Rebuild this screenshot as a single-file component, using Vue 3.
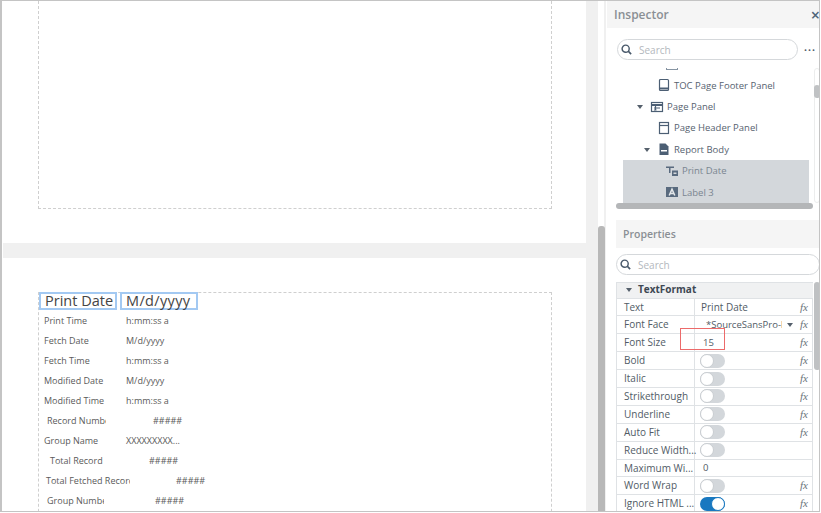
<script setup>
const fields = [
  { label: 'Print Time', value: 'h:mm:ss a', pad: 5, w: 87 },
  { label: 'Fetch Date', value: 'M/d/yyyy', pad: 5, w: 87 },
  { label: 'Fetch Time', value: 'h:mm:ss a', pad: 5, w: 87 },
  { label: 'Modified Date', value: 'M/d/yyyy', pad: 5, w: 87 },
  { label: 'Modified Time', value: 'h:mm:ss a', pad: 5, w: 87 },
  { label: 'Record Number', value: '#####', pad: 8, w: 67, vpad: 47 },
  { label: 'Group Name', value: 'XXXXXXXXX...', pad: 5, w: 87 },
  { label: 'Total Record', value: '#####', pad: 11, w: 64, vpad: 46 },
  { label: 'Total Fetched Record', value: '#####', pad: 7, w: 91, vpad: 46 },
  { label: 'Group Number', value: '#####', pad: 8, w: 65, vpad: 51 }
]
const tree = [
  { name: 'TOC Page Footer Panel', indent: 41, icon: 'footer' },
  { name: 'Page Panel', indent: 34, icon: 'panel', arrow: true, arrowAt: 21 },
  { name: 'Page Header Panel', indent: 41, icon: 'header' },
  { name: 'Report Body', indent: 41, icon: 'doc', arrow: true, arrowAt: 28 },
  { name: 'Print Date', indent: 42, icon: 'date', sel: true },
  { name: 'Label 3', indent: 42, icon: 'label', sel: true }
]
const props = [
  { n: 'Text', v: 'Print Date', fx: true },
  { n: 'Font Face', v: '*SourceSansPro-l', fx: true, select: true },
  { n: 'Font Size', v: '15', fx: true, num: true },
  { n: 'Bold', t: 'off', fx: true },
  { n: 'Italic', t: 'off', fx: true },
  { n: 'Strikethrough', t: 'off', fx: true },
  { n: 'Underline', t: 'off', fx: true },
  { n: 'Auto Fit', t: 'off', fx: true },
  { n: 'Reduce Width...', t: 'off' },
  { n: 'Maximum Wi...', v: '0', num: true },
  { n: 'Word Wrap', t: 'off', fx: true },
  { n: 'Ignore HTML ...', t: 'on', fx: true }
]
</script>

<template>
  <div class="frame">
    <main class="canvas">
      <section class="page first">
        <div class="box box-top"></div>
      </section>
      <section class="page second">
        <div class="box box-bottom">
          <div class="head-row">
            <span class="picked picked-a">Print Date</span>
            <span class="picked picked-b">M/d/yyyy</span>
          </div>
          <div v-for="f in fields" :key="f.label" class="field">
            <span class="f-label" :style="{ paddingLeft: f.pad + 'px', width: f.w + 'px' }">{{ f.label }}</span>
            <span class="f-value" :style="{ paddingLeft: (f.vpad || 0) + 'px' }">{{ f.value }}</span>
          </div>
        </div>
      </section>
    </main>
    <div class="gutter"><div class="gutter-track"></div><div class="gutter-thumb"></div></div>
    <aside class="side">
      <header class="ins-head">
        <span>Inspector</span><span class="close">×</span>
      </header>
      <div class="ins-search">
        <div class="search">
          <svg width="11" height="11" viewBox="0 0 13 13"><circle cx="5.5" cy="5.5" r="4.2" fill="none" stroke="#48586a" stroke-width="1.7"/><path d="M8.5 8.5L12 12" stroke="#48586a" stroke-width="1.9"/></svg>
          <span>Search</span>
        </div>
        <span class="dots">•••</span>
      </div>
      <div class="tree-wrap">
        <div class="tree">
          <div class="cut-icon"></div>
          <div v-for="t in tree" :key="t.name" class="node" :class="{ sel: t.sel }" :style="{ paddingLeft: t.indent + 'px' }">
            <i v-if="t.arrow" class="tri" :style="{ left: t.arrowAt + 'px' }"></i>
            <svg width="14" height="14" viewBox="0 0 14 14" class="ico">
              <g v-if="t.icon === 'footer'" fill="none" stroke="#4c5f74" stroke-width="1.2"><rect x="2.500" y="1.500" width="9" height="11" rx="1"/><path d="M2.500 10.500h9" stroke-width="2"/></g>
              <g v-else-if="t.icon === 'panel'" fill="none" stroke="#4c5f74" stroke-width="1.2"><rect x="1.500" y="2.500" width="11" height="9"/><path d="M1.500 5h11" stroke-width="2"/><path d="M4 8h6M4 10h2.500M5.500 6v4.500"/></g>
              <g v-else-if="t.icon === 'header'" fill="none" stroke="#4c5f74" stroke-width="1.2"><rect x="2.500" y="1.500" width="9" height="11"/><path d="M2.500 4.500h9"/></g>
              <g v-else-if="t.icon === 'doc'"><path d="M2.500 1.500h6l3 3v8.500h-9z" fill="#4c5f74"/><rect x="4" y="8" width="6" height="1.500" fill="#fff"/></g>
              <g v-else-if="t.icon === 'date'" fill="#4c5f74"><path d="M1 2.500h8V4H5.500v5H4V4H1z"/><rect x="7" y="6.500" width="6" height="5.500"/><rect x="8.500" y="8.500" width="3" height="1.500" fill="#d3d7db"/></g>
              <g v-else><rect x="1" y="2" width="12" height="10" fill="#4c5f74"/><path d="M4.200 10.500L7 4.200l2.800 6.300M5.200 8.600h3.600" fill="none" stroke="#e6e9ec" stroke-width="1.500"/></g>
            </svg>
            <span>{{ t.name }}</span>
          </div>
        </div>
        <div class="tree-v"><div class="tree-v-thumb"></div></div>
        <div class="tree-h"></div>
      </div>
      <header class="prop-head">Properties</header>
      <div class="prop-search">
        <div class="search wide">
          <svg width="11" height="11" viewBox="0 0 13 13"><circle cx="5.500" cy="5.500" r="4.200" fill="none" stroke="#48586a" stroke-width="1.700"/><path d="M8.500 8.500L12 12" stroke="#48586a" stroke-width="1.900"/></svg>
          <span>Search</span>
        </div>
      </div>
      <div class="prop-wrap">
        <div class="table">
          <div class="group"><i class="tri dark"></i>TextFormat</div>
          <div v-for="p in props" :key="p.n" class="row">
            <div class="name">{{ p.n }}</div>
            <div class="val" :class="{ num: p.num, select: p.select }">
              <span v-if="p.v">{{ p.v }}</span>
              <i v-if="p.select" class="tri small"></i>
              <span v-if="p.t" class="toggle" :class="p.t"><b></b></span>
              <em v-if="p.fx" class="fx">fx</em>
            </div>
          </div>
          <div class="mark"></div>
        </div>
        <div class="prop-v"></div>
      </div>
    </aside>
  </div>
</template>

<style>
html, body { margin: 0; background: #fff; overflow: hidden; }
</style>

<style scoped>
.frame {
  width: 820px; height: 512px; box-sizing: border-box;
  border: 1px solid #c4c4c4; border-left-width: 2px;
  display: flex; overflow: hidden; background: #fff;
  font-family: "Open Sans", "Liberation Sans", sans-serif;
  color: #46505c;
}
.canvas { width: 584px; flex: none; box-sizing: border-box; border-left: 1px solid #fff; background: #f0f0f0; display: flex; flex-direction: column; gap: 15px; overflow: hidden; }
.page { background: #fff; flex: none; }
.first { height: 242px; }
.second { flex: 1; padding-top: 34px; }
.box { margin-left: 35px; width: 514px; box-sizing: border-box; border: 1px dashed #cfcfcf; }
.box-top { height: 208px; border-top: 0; }
.box-bottom { height: 240px; border-bottom: 0; }
.head-row { display: flex; gap: 3px; height: 18px; margin-top: -1px; }
.picked { box-sizing: border-box; border: 2px solid #a3c9f2; height: 18px; padding-left: 4px; font-size: 14.500px; line-height: 14px; color: #444; }
.picked-a { width: 78px; }
.picked-b { width: 78px; letter-spacing: .35px; }
.field { display: flex; height: 20px; align-items: center; font-size: 9px; color: #5a5a5a; white-space: nowrap; }
.f-label { box-sizing: border-box; overflow: hidden; flex: none; }
.f-value { flex: none; }

.gutter { width: 20px; flex: none; background: #f0f0f0; position: relative; }
.gutter-track { position: absolute; left: 12px; top: 0; bottom: 0; width: 6px; background: #fff; }
.gutter-thumb { position: absolute; left: 12px; top: 225px; bottom: 0; width: 7px; background: #b8b8b8; border-radius: 3px 3px 0 0; }

.side { flex: 1; min-width: 0; display: flex; flex-direction: column; background: #fff; font-size: 10px; }
.ins-head { height: 27px; flex: none; margin-left: 1px; background: #f5f5f5; display: flex; align-items: center; justify-content: space-between; padding-left: 7px; font-size: 12px; font-weight: 600; color: #8a8f94; }
.close { font-size: 16px; font-weight: 600; color: #4f6478; margin-right: -1px; }
.ins-search { display: flex; align-items: center; gap: 6px; padding: 11px 0 0 11px; flex: none; }
.search { box-sizing: border-box; width: 181px; height: 21px; border: 1px solid #d5d8db; border-radius: 11px; display: flex; align-items: center; gap: 7px; padding-left: 3px; font-size: 10px; color: #b3b8bd; }
.search.wide { width: 204px; }
.dots { font-size: 8px; letter-spacing: 1px; color: #55606c; }
.tree-wrap { position: relative; height: 141px; margin: 8px 0 0 10px; flex: none; }
.tree { width: 197px; height: 135px; overflow: hidden; position: relative; }
.cut-icon { height: 6.500px; position: relative; }
.cut-icon::before { content: ""; position: absolute; left: 50px; top: -1px; width: 10px; height: 2px; border: 1px solid #8795a3; border-top: 0; }
.node { height: 21.400px; display: flex; align-items: center; gap: 3px; position: relative; box-sizing: border-box; color: #56626f; font-size: 9.500px; white-space: nowrap; }
.node .ico { flex: none; }
.node.sel { background: #d3d7db; margin-left: 7px; margin-right: 4px; color: #7a8590; }
.node.sel .ico { opacity: .9; }
.tri { position: absolute; width: 0; height: 0; border-left: 3px solid transparent; border-right: 3px solid transparent; border-top: 4px solid #55606c; top: 9px; }
.tree-v { position: absolute; left: 198px; top: 0; width: 6px; height: 135px; background: #fff; border: 1px solid #eceded; box-sizing: border-box; border-radius: 3px; }
.tree-v-thumb { position: absolute; top: 16px; left: -1px; width: 6px; height: 13px; background: #c0c2c4; border-radius: 3px; }
.tree-h { position: absolute; left: 0; top: 135px; width: 197px; height: 6px; background: #b4b6b8; border-radius: 3px; }
.prop-head { height: 28px; flex: none; margin: 11px 0 0 10px; background: #f5f5f5; display: flex; align-items: center; padding-left: 7px; font-size: 10.500px; font-weight: 600; color: #8a8f94; }
.prop-search { padding: 6px 0 0 10px; flex: none; }
.prop-wrap { position: relative; margin: 7px 0 0 10px; flex: 1; }
.table { width: 197px; position: relative; border-left: 1px solid #dfe2e5; box-sizing: border-box; }
.group { height: 14.500px; background: #f0f1f2; border-top: 1px solid #dfe2e5; position: relative; padding-left: 21px; font-size: 10px; font-weight: 700; line-height: 13px; color: #3e4853; }
.group .tri { left: 9px; top: 5px; }
.row { height: 17.900px; box-sizing: border-box; display: flex; border-top: 1px solid #dfe2e5; border-right: 1px solid #dfe2e5; white-space: nowrap; }
.name { width: 78px; flex: none; box-sizing: border-box; padding-left: 7px; line-height: 16px; border-right: 1px solid #dfe2e5; color: #515b66; font-size: 10px; }
.val { flex: 1; display: flex; align-items: center; padding-left: 6px; position: relative; line-height: 16px; color: #515b66; font-size: 10px; }
.val.num { padding-left: 8px; font-size: 9.500px; }
.val.select { padding-left: 11px; font-size: 9.500px; }
.val.select > span { width: 76px; overflow: hidden; }
.tri.small { left: 92px; top: 7px; }
.toggle { width: 25px; height: 14px; margin-left: -1px; border-radius: 7px; background: #d3d7db; position: relative; display: block; }
.toggle b { position: absolute; left: 0; top: 0; width: 14px; height: 14px; box-sizing: border-box; border-radius: 50%; background: #fff; border: 1px solid #c9cdd1; }
.toggle.on { background: #1878c0; }
.toggle.on b { left: 11px; border: 1px solid #1878c0; width: 14px; height: 14px; }
.fx { position: absolute; right: 4px; top: 0; font-family: "Liberation Serif", serif; font-size: 11px; color: #6a727a; }
.mark { position: absolute; left: 63px; top: 46px; width: 45px; height: 22px; box-sizing: border-box; border: 1px solid #ec6a6a; }
.prop-v { position: absolute; left: 198px; top: 0; width: 6px; height: 88px; background: #bfc1c3; border-radius: 3px; }
</style>
